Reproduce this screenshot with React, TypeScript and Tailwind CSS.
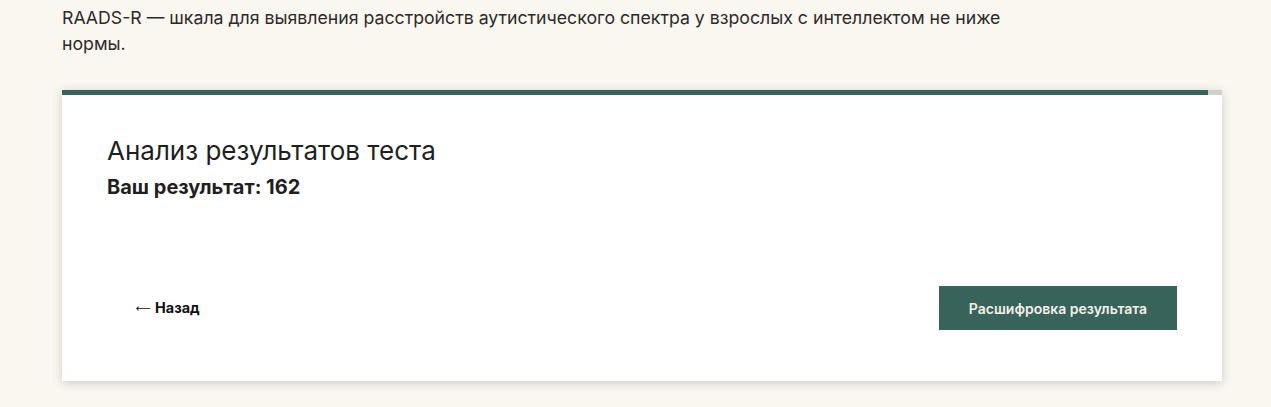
const App: React.FC = () => (
  <div
    className="min-h-[407px] w-full bg-[#faf6f0] px-[62px] pt-[5px] text-[#222]"
    style={{ fontFamily: "Inter, 'Noto Sans', sans-serif" }}
  >
    <p className="max-w-[990px] text-[17.7px] leading-[26px] text-[#2b2b2b]">
      RAADS-R — шкала для выявления расстройств аутистического спектра у взрослых с
      интеллектом не ниже нормы.
    </p>

    <section className="mt-[33px] w-[1160px] bg-white shadow-[0_2px_10px_rgba(0,0,0,0.18)]">
      {/* progress bar */}
      <div className="flex h-[5px] w-full bg-[#cfcfcf]">
        <div className="h-full w-[1146px] bg-[#37635a]" />
      </div>

      <div className="px-[45px] pb-[51px] pt-[40px]">
        <h2 className="text-[26px] leading-[32px] font-normal text-[#1f1f1f]">
          Анализ результатов теста
        </h2>
        <p className="mt-[6px] text-[20px] leading-[28px] font-bold text-[#1f1f1f]">
          Ваш результат: 162
        </p>

        <div className="mt-[85px] flex items-center justify-between">
          <button className="flex h-[44px] items-center gap-[4px] pl-[29px] pr-[29px] text-[14.4px] font-bold text-[#111]">
            <span className="font-['DejaVu_Sans',sans-serif] text-[10.5px] leading-none font-normal">⟵</span>
            Назад
          </button>
          <button className="h-[44px] w-[238px] bg-[#37635a] text-[14px] font-semibold text-[#f3efe8]">
            Расшифровка результата
          </button>
        </div>
      </div>
    </section>
  </div>
);

export default App;
